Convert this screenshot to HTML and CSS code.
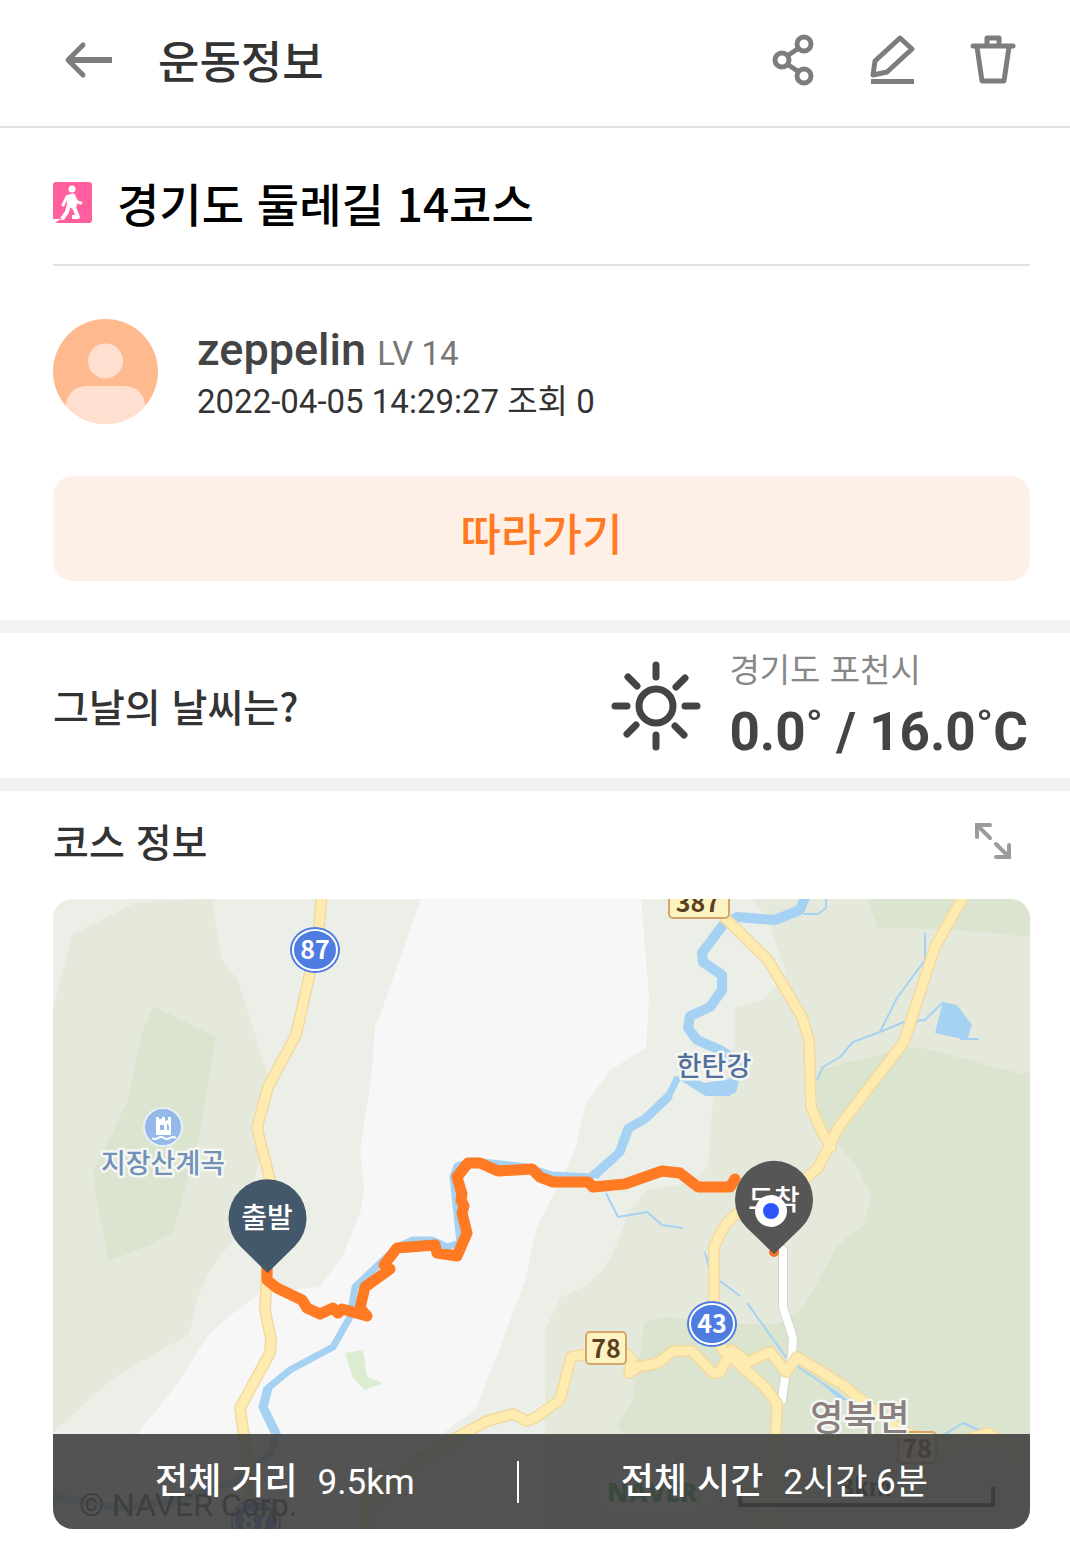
FILE: index.html
```html
<!DOCTYPE html>
<html lang="ko">
<head>
<meta charset="UTF-8">
<meta name="viewport" content="width=device-width, initial-scale=1.0">
<title>운동정보</title>
<link rel="stylesheet" href="styles.css">
</head>
<body>
<header class="topbar">
  <button type="button" class="icon-btn" aria-label="뒤로">
    <svg width="54" height="54" viewBox="0 0 54 54" fill="none" stroke="#7d7d7d" stroke-width="5" stroke-linecap="round" stroke-linejoin="round"><path d="M21 12 6 27l15 15"/><path d="M8 27h42" stroke-linecap="butt" stroke-width="6"/></svg>
  </button>
  <h1>운동정보</h1>
  <div class="actions">
    <button type="button" class="icon-btn" aria-label="공유">
      <svg width="54" height="54" viewBox="0 0 54 54" fill="none" stroke="#7d7d7d" stroke-width="5"><circle cx="38" cy="11" r="7"/><circle cx="16" cy="27" r="7"/><circle cx="38" cy="43" r="7"/><path d="m21 23 12-8M21 31l12 8"/></svg>
    </button>
    <button type="button" class="icon-btn" aria-label="수정">
      <svg width="54" height="54" viewBox="0 0 54 54" fill="none" stroke="#7d7d7d" stroke-width="5" stroke-linejoin="round"><path d="M34 5 46 16 21 39 7 42 9 28Z"/><path d="M5 48.500h43"/></svg>
    </button>
    <button type="button" class="icon-btn" aria-label="삭제">
      <svg width="54" height="54" viewBox="0 0 54 54" fill="none" stroke="#7d7d7d" stroke-width="5" stroke-linejoin="round"><path d="M7 13h40" stroke-linecap="round"/><path d="M21 12V5h12v7M11 14l5 34h22l5-34"/></svg>
    </button>
  </div>
</header>

<main>
  <section class="post">
    <div class="post-title">
      <svg width="39" height="41" viewBox="0 0 39 41"><rect width="39" height="41" rx="3" fill="#ff5f9e"/><circle cx="19" cy="7" r="3.500" fill="#fff"/><path d="m14 15 6-2 4 7 4 1" fill="none" stroke="#fff" stroke-width="3" stroke-linecap="round" stroke-linejoin="round"/><path d="m14 15-4 8" stroke="#fff" stroke-width="3" stroke-linecap="round"/><path d="m14 13 8-1 2 12-4 3-6-3z" fill="#fff"/><path d="m16 22-2 8-5 7M20 23l5 12h-6" fill="none" stroke="#fff" stroke-width="4" stroke-linejoin="round"/><path d="M0 41v-4h12l-6 1-4 3z" fill="#fff"/></svg>
      <h2>경기도 둘레길 14코스</h2>
    </div>

    <div class="author">
      <svg class="avatar" width="105" height="105" viewBox="0 0 105 105"><defs><clipPath id="avatar-clip"><circle cx="52.500" cy="52.500" r="52.500"/></clipPath></defs><g clip-path="url(#avatar-clip)"><rect width="105" height="105" fill="#ffb98f"/><circle cx="52.500" cy="42" r="17.500" fill="#ffe0d0"/><rect x="13" y="67" width="79" height="60" rx="20" fill="#ffe0d0"/></g></svg>
      <div class="author-info">
        <p class="author-name">zeppelin <span>LV 14</span></p>
        <p class="author-meta"><time datetime="2022-04-05T14:29:27">2022-04-05 14:29:27</time> 조회 0</p>
      </div>
    </div>

    <button type="button" class="follow-btn">따라가기</button>
  </section>

  <section class="weather">
    <h3>그날의 날씨는?</h3>
    <svg width="92" height="92" viewBox="0 0 92 92" fill="none" stroke="#444" stroke-width="7" stroke-linecap="round"><circle cx="46" cy="46" r="17"/><path d="M46 5v12M46 75v12M5 46h12M75 46h12M18 17l9 9M65 66l9 9M75 18l-9 9M26 65l-9 9"/></svg>
    <div class="weather-info">
      <p class="place">경기도 포천시</p>
      <p class="temp">0.0˚ / 16.0˚C</p>
    </div>
  </section>

  <section class="course">
    <div class="course-head">
      <h3>코스 정보</h3>
      <button type="button" class="icon-btn" aria-label="지도 확대">
        <svg width="38" height="38" viewBox="0 0 38 38" fill="none" stroke="#9b9b9b" stroke-width="4" stroke-linecap="round"><path d="M3 15V3h13M4 4l12 12M35 23v12H22M34 34 22 22"/></svg>
      </button>
    </div>

    <div class="map">
      <svg class="map-canvas" viewBox="53 899 977 630" preserveAspectRatio="xMidYMid slice">
        <rect x="53" y="899" width="977" height="630" fill="#f7f7f7"/>
        <!-- terrain -->
        <g fill="#ebefe8">
          <path d="M53 899H421L380 1015 375 1026 371 1080 365 1118 360 1151 364 1185 361 1210 343 1255 320 1287 297 1289 260 1293 227 1318 207 1337 178 1383 138 1433 53 1529Z"/>
          <path d="M641 899 649 997 646 1048 610 1070 586 1103 576 1147 557 1188 537 1227 525 1280 500 1347 475 1410 443 1433 350 1529H1030V899Z"/>
        </g>
        <g fill="#e4e9db">
          <path d="M72 935 137 902 212 899 221 958 238 980 267 1073 258 1130 258 1167 235 1237 208 1273 197 1300 189 1334 110 1380 53 1433V1010Z"/>
          <path d="M753 899 765 915 787 973 763 1000 735 1008V1043L713 1098 708 1167 688 1183 648 1190 630 1210 613 1253 603 1270 587 1285 560 1298 545 1330V1529H1030V899Z"/>
        </g>
        <g fill="#dae4ce">
          <path d="M153 1006 216 1037 197 1147 182 1200 173 1232 150 1245 108 1261 97 1200 93 1173 128 1100 142 1033Z"/>
          <path d="M867 899 878 928 950 929 1030 937V899Z"/>
          <path d="M1030 1072 1022 1074 922 1048 903 1049 880 1055 843 1063 817 1072 812 1110 837 1143 857 1167 872 1197 863 1225 838 1245 803 1308 778 1324H720L668 1317 645 1322 632 1400 617 1427 652 1460 700 1529H1030Z"/>
        </g>
        <path d="M345 1353 363 1350 367 1377 383 1383 365 1390 353 1378Z" fill="#dcecd0"/>
        <!-- water -->
        <g fill="none" stroke="#a5d2f3" stroke-linejoin="round">
          <path d="M808 890 800 910 775 920 737 917 723 925 702 953 703 962 722 975V990L710 1007 690 1016 688 1028 697 1040 720 1050 738 1062 732 1089 707 1091 680 1074" stroke-width="10"/>
          <path d="M678 1077 668 1097 647 1117 627 1128 618 1153 590 1177 552 1175 527 1167 473 1161 457 1166 453 1177 460 1243 447 1247 432 1240H413L397 1247 355 1287 350 1317 333 1347 290 1370 268 1388 263 1407 277 1433 270 1455 237 1480 180 1500 120 1508 53 1497" stroke-width="7"/>
          <path d="M670 1095 645 1119 629 1128 620 1152 594 1176M268 1388 263 1407 275 1432" stroke-width="9"/>
          <path d="M804 914H818L826 908V899M925 933V960L897 998 880 1032 904 1022 925 1020 943 1002M880 1032 853 1042 840 1057 823 1067 817 1080M606 1193 618 1217 647 1212 662 1225 683 1228M720 1281 740 1296M747 1303 788 1360 840 1395M940 1437 963 1423 981 1431" stroke-width="2"/>
        </g>
        <path d="M943 1002 957 1005 972 1025 967 1040 935 1033ZM960 1038H979V1040H960ZM703 1248 710 1262 711 1280ZM818 1380 848 1400 840 1400ZM690 1085 738 1078 730 1096H707Z" fill="#a5d2f3"/>
        <!-- roads -->
        <g fill="none" stroke-linejoin="round" stroke-linecap="round">
          <path d="M783 1250V1307L793 1338 792 1357 785 1377 782 1400" stroke="#d2d5cf" stroke-width="10"/>
          <path d="M783 1250V1307L793 1338 792 1357 785 1377 782 1400" stroke="#fff" stroke-width="8"/>
          <defs><path id="roads" d="M322 890 319 928 310 973 296 1035 268 1087 257 1128 270 1180 267 1270 265 1310 271 1340 270 1353 240 1408 244 1437 250 1483 255 1529M725 918 768 960 802 1017 809 1040 811 1107 822 1132 831 1147M967 890 935 947 904 1042 838 1128 818 1168 800 1183 735 1215 725 1225 714 1247V1330L723 1350 765 1387 777 1403 776 1433 767 1529M380 1500 403 1473 430 1452 487 1421 513 1414 527 1421 535 1418 560 1400 571 1357 587 1354H627L632 1360 629 1373 638 1367 658 1363 673 1351H692L713 1373 720 1372 732 1350 748 1362 770 1352 786 1372 797 1357 843 1385 862 1400 900 1430 940 1447 988 1433 1030 1457M365 1529V1500L380 1475"/></defs>
          <use href="#roads" stroke="#f2d9a2" stroke-width="12"/>
          <use href="#roads" stroke="#fdebb0" stroke-width="9"/>
        </g>
        <!-- road numbers -->
        <g class="shield">
          <ellipse cx="315" cy="950" rx="25" ry="23" fill="#4f7ce0"/><ellipse cx="315" cy="950" rx="22" ry="20" fill="#4f7ce0" stroke="#fff" stroke-width="2"/>
          <text x="315" y="959" fill="#fff">87</text>
          <ellipse cx="712" cy="1324" rx="25" ry="23" fill="#4f7ce0"/><ellipse cx="712" cy="1324" rx="22" ry="20" fill="#4f7ce0" stroke="#fff" stroke-width="2"/>
          <text x="712" y="1333" fill="#fff">43</text>
          <ellipse cx="256" cy="1521" rx="25" ry="23" fill="#4f7ce0"/><ellipse cx="256" cy="1521" rx="22" ry="20" fill="#4f7ce0" stroke="#fff" stroke-width="2"/>
          <text x="256" y="1530" fill="#fff">87</text>
          <rect x="669" y="886" width="60" height="32" rx="4" fill="#fdf3c0" stroke="#d6a468" stroke-width="2"/>
          <text x="698" y="912" fill="#5a4020">387</text>
          <rect x="586" y="1332" width="40" height="32" rx="4" fill="#fdf3c0" stroke="#d6a468" stroke-width="2"/>
          <text x="606" y="1358" fill="#5a4020">78</text>
          <rect x="898" y="1432" width="38" height="31" rx="4" fill="#fdf3c0" stroke="#d6a468" stroke-width="2"/>
          <text x="917" y="1458" fill="#5a4020">78</text>
        </g>
        <!-- places -->
        <circle cx="163" cy="1127" r="19" fill="#94b9e9" stroke="#e7f0f7" stroke-width="2"/>
        <path d="M156 1117h3v2h3v-2h3v4l3-1v-3h3v18h-15z" fill="#fff"/><path d="M160 1125h4v5h-4zM167 1123l2 3v4h-2z" fill="#94b9e9"/><path d="M152 1138q3 2 6 0t6 0 6 0 6 0" stroke="#fff" stroke-width="2" fill="none"/>
        <text class="place-label" x="163" y="1173" font-size="27" fill="#7191b8">지장산계곡</text>
        <text class="place-label" x="714" y="1076" font-size="27" fill="#526f9c">한탄강</text>
        <text class="place-label" x="860" y="1431" font-size="36" fill="#8b8080">영북면</text>
        <!-- attribution and scale -->
        <text x="79" y="1516" class="attribution">© NAVER Corp.</text>
        <rect x="593" y="1473" width="122" height="40" rx="20" fill="#fff" fill-opacity=".5"/>
        <text x="607" y="1502" class="naver">NAVER</text>
        <text x="866" y="1496" class="scale">3km</text>
        <path d="M740 1487v18h253v-18" fill="none" stroke="#222" stroke-width="4"/>
        <!-- track -->
        <path d="M267 1268V1280L277 1288 302 1300 307 1308 320 1314 333 1308 338 1313 342 1309 367 1316 360 1308 365 1287 390 1269 384 1265 397 1248 435 1245 437 1253 457 1256 467 1233 462 1213 464 1206 461 1200 462 1194 457 1177 468 1163H480L498 1171 532 1169 540 1177 553 1182H588L593 1187 625 1184 662 1171 680 1173 698 1187H730L735 1179" fill="none" stroke="#ff7a22" stroke-width="11" stroke-linecap="round" stroke-linejoin="round"/>
        <circle cx="774" cy="1252" r="5" fill="#f27228"/>
        <!-- pins -->
        <g class="pin">
          <path d="M267.500 1273 240 1246A39 39 0 1 1 295 1246Z" fill="#44586c"/>
          <text x="267" y="1228">출발</text>
          <path d="M774 1254 747 1228A39 39 0 1 1 801 1228Z" fill="#565656"/>
          <text x="774" y="1210">도착</text>
        </g>
        <circle cx="771" cy="1211" r="16" fill="#fff"/>
        <circle cx="771" cy="1211" r="8" fill="#2c54ff"/>
      </svg>
      <dl class="summary">
        <div><dt>전체 거리</dt><dd>9.5km</dd></div>
        <div class="divider"></div>
        <div><dt>전체 시간</dt><dd>2시간 6분</dd></div>
      </dl>
    </div>
  </section>
</main>
</body>
</html>
```
FILE: styles.css
```css
:root{--text:#333;--line:#e2e2e2;--band:#f1f2f4;--accent:#ff7a22;--kr:"Noto Sans CJK KR",sans-serif;--mix:Roboto,"Noto Sans CJK KR",sans-serif}
*{box-sizing:border-box;margin:0;padding:0}
body{font-family:var(--kr);color:var(--text);background:#fff}
svg{display:block}
button{font-family:inherit;border:none;background:none;cursor:pointer}
h1,h2,h3{font-weight:500}
.topbar{display:flex;align-items:center;height:128px;padding:0 50px 6px 62px;border-bottom:2px solid var(--line)}
.topbar h1{margin-left:42px;font-size:45px;line-height:60px}
.actions{display:flex;gap:46px;margin-left:auto}
.post{padding:0 40px 39px 53px}
.post-title{display:flex;align-items:center;gap:25px;height:138px;padding-top:12px;border-bottom:2px solid var(--line);color:#000}
.post-title h2{font-size:46px;line-height:60px}
.author{display:flex;align-items:center;gap:39px;height:210px}
.author-info{padding-top:6px;font-family:var(--mix)}
.author-name{font-size:45px;line-height:52px;font-weight:500;color:#444}
.author-name span{font-size:33px;font-weight:400;color:#777}
.author-meta{font-size:33px;line-height:44px}
.follow-btn{display:block;width:100%;height:105px;padding-top:6px;border-radius:20px;background:#fff0e7;color:var(--accent);font-size:44px;font-weight:500}
.weather{display:flex;align-items:center;height:171px;padding:0 42px 0 53px;border-top:13px solid var(--band);border-bottom:13px solid var(--band)}
.weather h3,.course h3{padding-bottom:2px;font-size:39px;line-height:60px}
.weather svg{margin-left:auto}
.weather-info{margin-left:27px}
.place{font-size:33px;line-height:48px;color:#888}
.temp{padding-top:4px;font-family:var(--mix);font-size:53px;line-height:72px;font-weight:700;color:#444}
.course{padding:0 40px 13px 53px}
.course-head{display:flex;align-items:center;justify-content:space-between;height:108px;padding:0 18px 8px 0}
.map{position:relative;overflow:hidden;border-radius:20px}
.map-canvas{width:100%;height:auto}
.map-canvas text{font-family:var(--kr)}
.shield text{font-size:25px;font-weight:700;text-anchor:middle}
.place-label{font-weight:500;text-anchor:middle;paint-order:stroke;stroke:#f4f7f2;stroke-width:5px;stroke-linejoin:round}
.map-canvas .attribution{font-family:Roboto,sans-serif;font-size:32px;fill:#333}
.map-canvas .naver{font-family:"Open Sans",sans-serif;font-size:26px;font-weight:800;fill:#1a9a45}
.map-canvas .scale{font-size:24px;font-weight:700;text-anchor:middle;fill:#222}
.pin text{font-size:28px;font-weight:500;text-anchor:middle;fill:#fff}
.summary{position:absolute;left:0;right:0;bottom:0;display:flex;align-items:center;justify-content:space-evenly;height:95px;background:rgba(64,64,64,.9);color:#fff;font-size:36px;line-height:48px}
.summary div{display:flex;align-items:baseline;gap:20px;padding-bottom:2px}
.summary dt{font-weight:500}
.summary dd{font-family:var(--mix);font-size:35px}
.summary .divider{width:2px;height:42px;padding:0;background:#fff}
```
